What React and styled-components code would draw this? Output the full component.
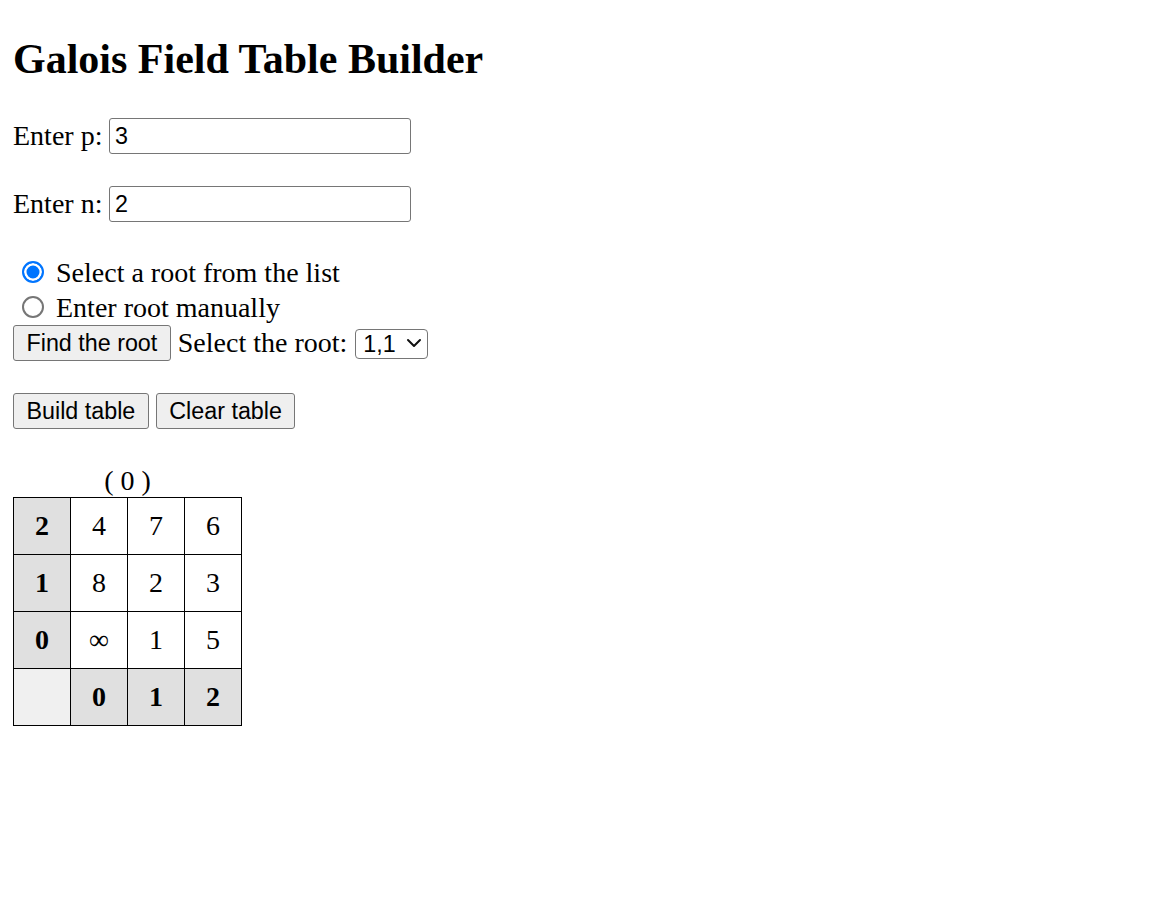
import React from 'react';
import styled, { createGlobalStyle } from 'styled-components';
import { ChevronDown } from 'lucide-react';

const GlobalStyle = createGlobalStyle`
  body {
    margin: 0;
    background: #fff;
    color: #000;
    font-family: "Liberation Serif", "Times New Roman", serif;
    font-size: 28px;
  }
`;

const Page = styled.div`
  padding: 35px 13px 0;
`;

const Title = styled.h1`
  font-size: 42px;
  font-weight: bold;
  line-height: normal;
  margin: 0 0 35px;
`;

const FieldRow = styled.div`
  display: flex;
  align-items: center;
  gap: 7px;
  height: 36px;
  margin-top: ${(p) => p.$top || 0}px;
`;

const Input = styled.input`
  box-sizing: border-box;
  width: 302px;
  height: 36px;
  padding: 0 4.5px;
  border: 1px solid #767676;
  border-radius: 3px;
  font-family: "Liberation Sans", Arial, sans-serif;
  font-size: 23.3px;
  color: #000;
`;

const RadioGroup = styled.div`
  margin-top: 33px;
`;

const RadioRow = styled.label`
  display: flex;
  align-items: center;
  height: 35px;
`;

const Radio = styled.input`
  appearance: none;
  box-sizing: border-box;
  width: 22px;
  height: 22px;
  margin: -2px 12px 0 9px;
  border-radius: 50%;
  border: 2px solid #767676;
  background: #fff;

  &:checked {
    border-color: #0075ff;
    background: #0075ff;
    box-shadow: inset 0 0 0 2.5px #fff;
  }
`;

const ButtonRow = styled.div`
  display: flex;
  align-items: center;
  gap: 7px;
  height: 36px;
  margin-top: ${(p) => p.$top || 0}px;
`;

const Button = styled.button`
  box-sizing: border-box;
  height: 36px;
  padding: 0 12.5px;
  background: #efefef;
  border: 1px solid #767676;
  border-radius: 3px;
  font-family: "Liberation Sans", Arial, sans-serif;
  font-size: 23.3px;
  color: #000;
`;

const SelectWrap = styled.div`
  position: relative;
  display: inline-block;
  margin-left: 1px;
`;

const Select = styled.select`
  appearance: none;
  box-sizing: border-box;
  width: 73px;
  height: 30px;
  padding: 0 0 0 7px;
  background: #fff;
  border: 1px solid #767676;
  border-radius: 4px;
  font-family: "Liberation Sans", Arial, sans-serif;
  font-size: 23.3px;
  color: #000;
`;

const Chevron = styled(ChevronDown)`
  position: absolute;
  right: 2px;
  top: 4px;
  pointer-events: none;
  color: #111;
`;

const Table = styled.table`
  margin-top: 36px;
  border-collapse: collapse;
`;

const Caption = styled.caption`
  line-height: normal;
`;

const Cell = styled.td`
  width: 56px;
  height: 56px;
  padding: 0;
  border: 1px solid #000;
  text-align: center;
  background: ${(p) => (p.$corner ? '#f0f0f0' : p.$head ? '#e0e0e0' : '#fff')};
  font-weight: ${(p) => (p.$head ? 'bold' : 'normal')};
`;

const rows = [
  { label: '2', values: ['4', '7', '6'] },
  { label: '1', values: ['8', '2', '3'] },
  { label: '0', values: ['∞', '1', '5'] },
];

export default function App() {
  return (
    <>
      <GlobalStyle />
      <Page>
        <Title>Galois Field Table Builder</Title>

        <FieldRow>
          <span>Enter p:</span>
          <Input type="text" defaultValue="3" />
        </FieldRow>
        <FieldRow $top={32}>
          <span>Enter n:</span>
          <Input type="text" defaultValue="2" />
        </FieldRow>

        <RadioGroup>
          <RadioRow>
            <Radio type="radio" name="rootMode" defaultChecked />
            Select a root from the list
          </RadioRow>
          <RadioRow>
            <Radio type="radio" name="rootMode" />
            Enter root manually
          </RadioRow>
        </RadioGroup>

        <ButtonRow>
          <Button>Find the root</Button>
          <span>Select the root:</span>
          <SelectWrap>
            <Select defaultValue="1,1">
              <option value="1,1">1,1</option>
            </Select>
            <Chevron size={24} strokeWidth={2} />
          </SelectWrap>
        </ButtonRow>

        <ButtonRow $top={32}>
          <Button>Build table</Button>
          <Button>Clear table</Button>
        </ButtonRow>

        <Table>
          <Caption>( 0 )</Caption>
          <tbody>
            {rows.map((r) => (
              <tr key={r.label}>
                <Cell $head>{r.label}</Cell>
                {r.values.map((v, i) => (
                  <Cell key={i}>{v}</Cell>
                ))}
              </tr>
            ))}
            <tr>
              <Cell $corner />
              <Cell $head>0</Cell>
              <Cell $head>1</Cell>
              <Cell $head>2</Cell>
            </tr>
          </tbody>
        </Table>
      </Page>
    </>
  );
}
